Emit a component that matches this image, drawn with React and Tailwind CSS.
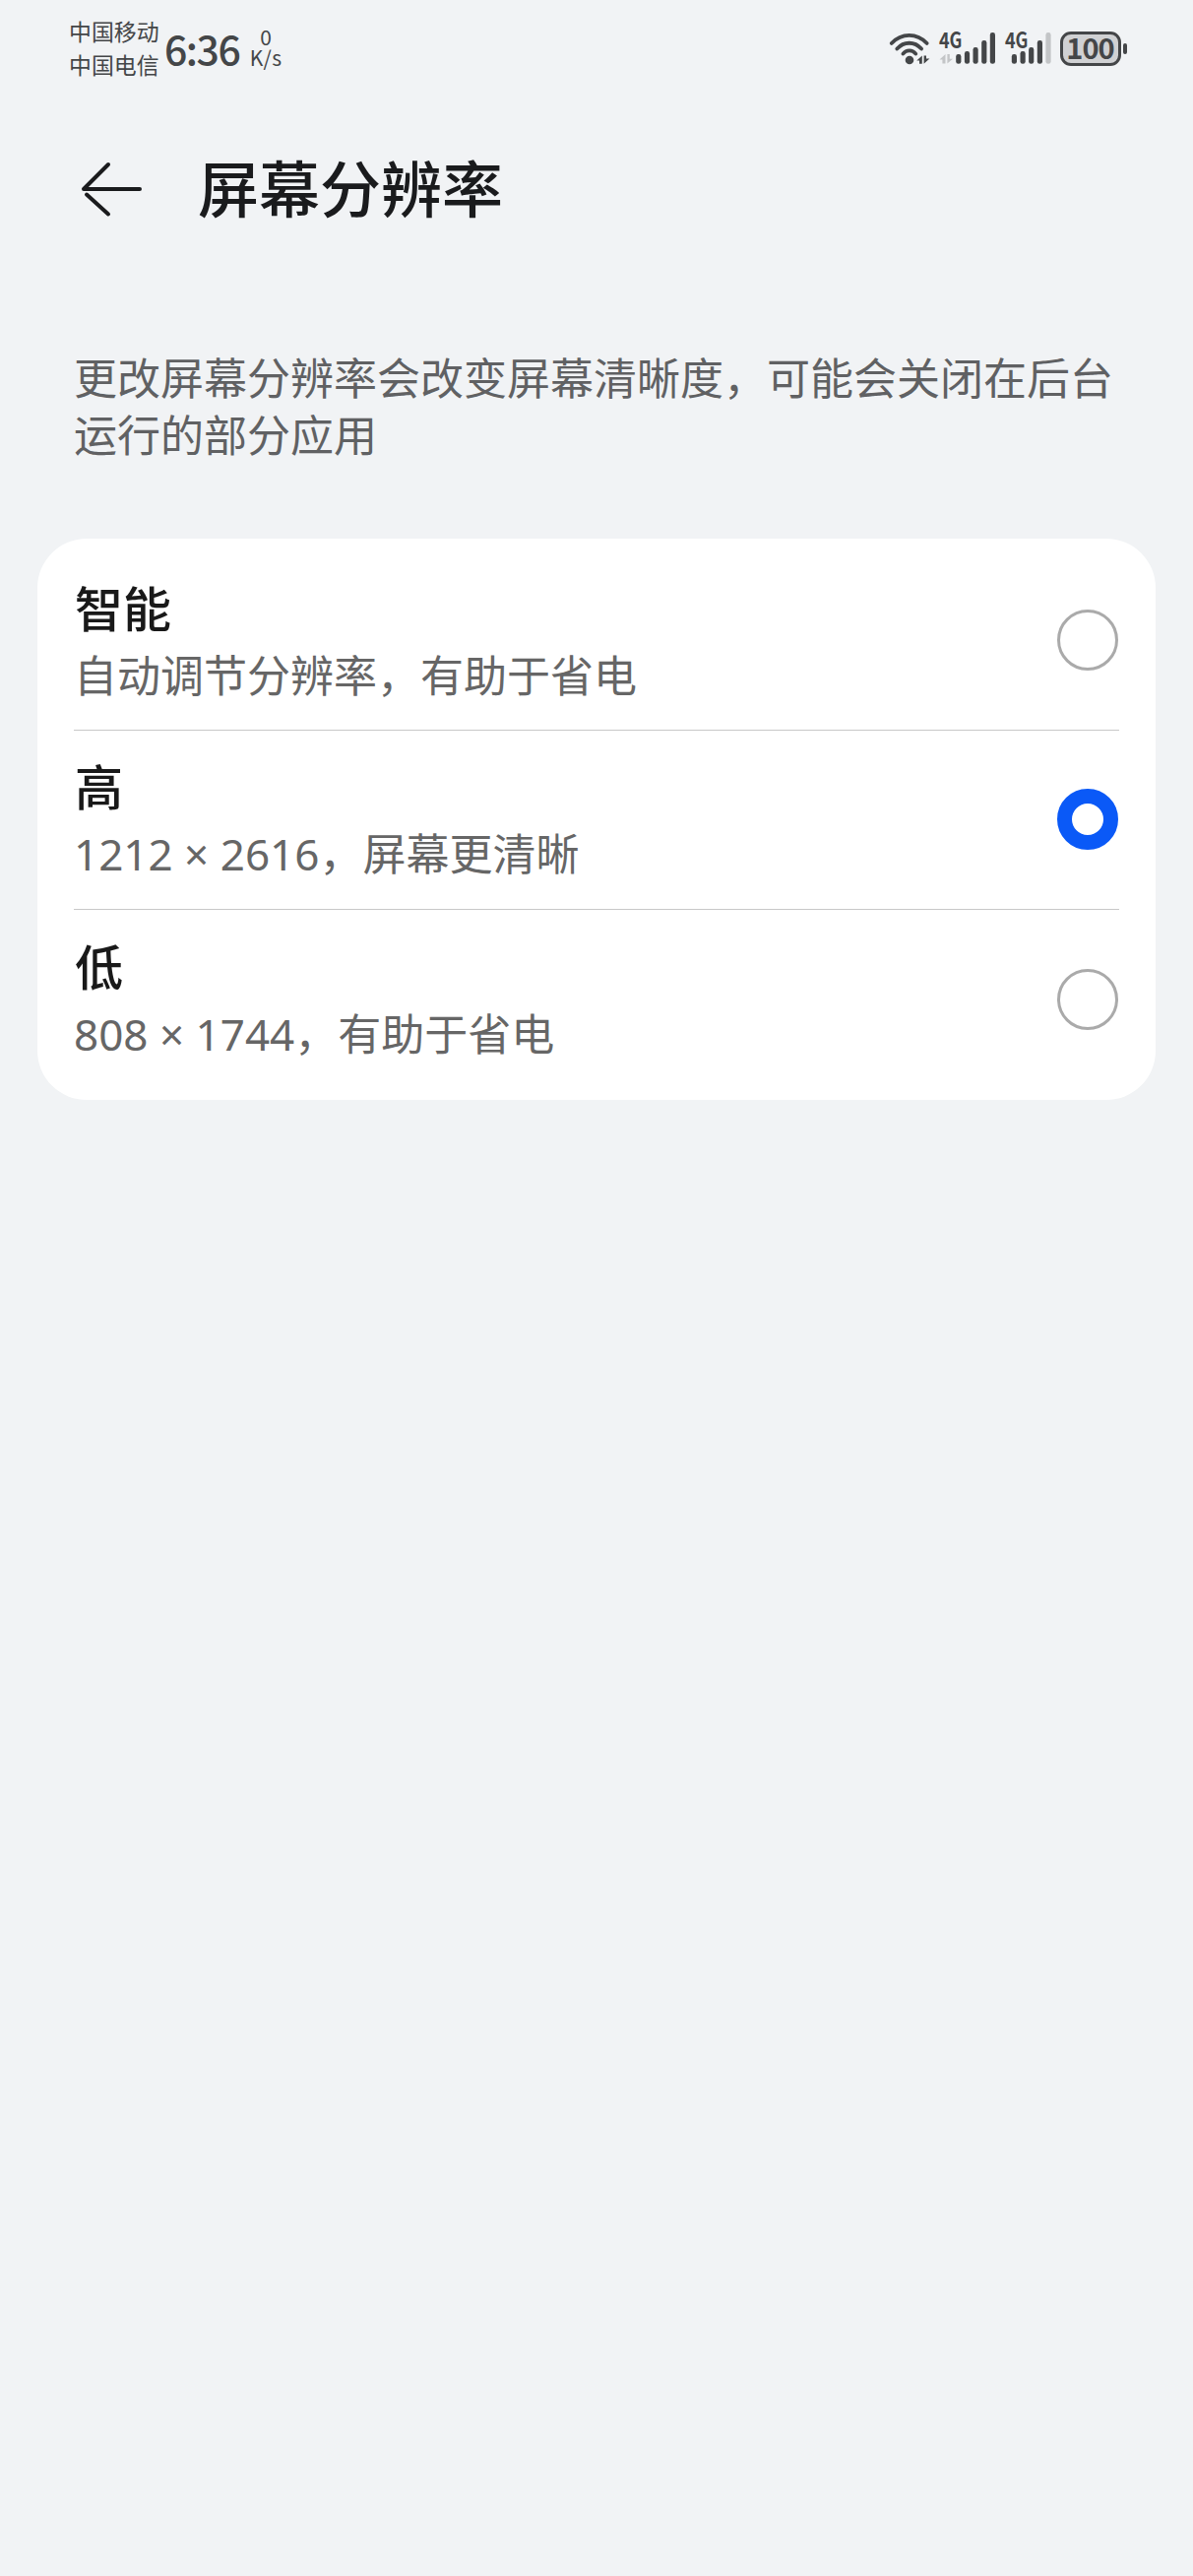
import React, { useState } from 'react';

const options = [
  { id: 'smart', title: '智能', note: '自动调节分辨率，有助于省电' },
  { id: 'high', title: '高', size: '1212 × 2616', note: '，屏幕更清晰' },
  { id: 'low', title: '低', size: '808 × 1744', note: '，有助于省电' },
];

const bars = [
  { x: 0, y: 25 },
  { x: 8.7, y: 22 },
  { x: 17.3, y: 18 },
  { x: 26, y: 11 },
  { x: 34.6, y: 3 },
];

const WifiIcon = () => (
  <svg className="h-[38px] w-[44px]" viewBox="0 0 44 38" fill="none" stroke="#444648" strokeLinecap="round">
    <path d="M4.7 14C15 3.2 30.4 3.2 40.7 14" strokeWidth="3.8" />
    <path d="M10.3 19.6C17.3 11.8 28.1 11.8 35.1 19.6" strokeWidth="3.8" />
    <path d="M16.4 24.6C19.9 20.4 25.8 20.4 29.3 24.6" strokeWidth="3.8" />
    <circle cx="23" cy="31" r="4.3" fill="#444648" stroke="none" />
    <path d="M30.3 31.6L35.8 26.5V34.8H33V31.6ZM37.6 26.5H40V29.4H43.4L37.6 34.8Z" fill="#444648" stroke="none" />
  </svg>
);

const SignalIcon = ({ level, offset, idle }) => (
  <svg className="h-[38px] w-[58px] overflow-visible" viewBox="0 0 58 38">
    <text
      x="0"
      y="19.3"
      fontSize="22"
      fontWeight="700"
      textLength="23.5"
      lengthAdjust="spacingAndGlyphs"
      fill="#444648"
      className="font-['Noto_Sans_CJK_SC',sans-serif]"
    >
      4G
    </text>
    {idle && <path d="M0.5 30.5L6.5 25V34.6H3.4V30.5ZM8.4 25H10.8V29.8H14L8.4 34.6Z" fill="#c3c5c7" />}
    {bars.map((bar, i) => (
      <rect
        key={bar.x}
        x={bar.x + offset}
        y={bar.y}
        width="5.2"
        height={34.8 - bar.y}
        rx="2.4"
        fill={i < level ? '#444648' : '#c3c5c7'}
      />
    ))}
  </svg>
);

const StatusBar = () => (
  <header className="flex h-[98px] items-center justify-between pl-[70px] pr-[67px] text-[#444648]">
    <div className="flex items-center">
      <div className="w-[97px] whitespace-nowrap pb-[3px] text-[22.9px] leading-[34px]">
        <p>中国移动</p>
        <p>中国电信</p>
      </div>
      <p className="w-[86px] pb-[3px] text-[41px] font-medium leading-[50px] tracking-[-1.5px]">6:36</p>
      <div className="w-[34px] pb-[2px] text-center text-[21px] leading-[21px]">
        <p>0</p>
        <p className="whitespace-nowrap tracking-[0.3px]">K/s</p>
      </div>
    </div>
    <div className="flex items-center">
      <WifiIcon />
      <div className="ml-[9px]">
        <SignalIcon level={5} offset={17.2} idle />
      </div>
      <div className="ml-[9px] w-[47px]">
        <SignalIcon level={4} offset={6.8} />
      </div>
      <div className="ml-[9px] flex h-[35px] w-[62px] items-center justify-center rounded-[11px] border-[3px] border-[#444648] bg-[#d0d1d3] pr-px pb-[3px] text-[29px] font-bold leading-none tracking-[-1px]">
        100
      </div>
      <div className="ml-[2px] h-[11px] w-[4px] rounded-full bg-[#444648]" />
    </div>
  </header>
);

const Radio = ({ checked }) => (
  <span
    className={
      checked
        ? 'mr-px mb-px size-[62px] rounded-full border-[15px] border-[#0a59f7] bg-white'
        : 'mr-px mb-px size-[62px] rounded-full border-[3px] border-[#aaaaaa]'
    }
  />
);

const App = () => {
  const [selected, setSelected] = useState('high');

  return (
    <div className="min-h-screen w-[1212px] bg-[#f1f3f5] font-['Noto_Sans_CJK_SC',sans-serif]">
      <StatusBar />

      {/* Title bar */}
      <div className="flex h-[187px] items-center pl-[82px]">
        <button type="button" className="cursor-pointer" aria-label="返回">
          <svg className="h-[58px] w-[63px]" viewBox="0 0 63 58" fill="none" stroke="#1a1b1d" strokeWidth="4" strokeLinecap="round">
            <path d="M60 29H3L28 4" strokeLinejoin="round" />
            <path d="M28 54.5L6 34.5" />
          </svg>
        </button>
        <h1 className="ml-[56px] pb-[5px] text-[62px] font-medium leading-[80px] text-[#1a1b1d]">屏幕分辨率</h1>
      </div>

      <p className="px-[75px] pt-[68px] text-[44px] leading-[58px] text-[#606163]">
        更改屏幕分辨率会改变屏幕清晰度，可能会关闭在后台运行的部分应用
      </p>

      {/* Resolution options */}
      <div className="mx-[38px] mt-[78px] rounded-[50px] bg-white px-[37px] pt-[13px] pb-[11px]">
        {options.map((option) => (
          <button
            key={option.id}
            type="button"
            onClick={() => setSelected(option.id)}
            className="flex h-[182px] w-full cursor-pointer items-center justify-between border-[#c8c8c8] text-left not-last:border-b"
          >
            <div className="pb-px">
              <p className="pl-px text-[49px] font-medium leading-[69px] text-[#191919]">{option.title}</p>
              <p className="text-[44px] leading-[69px] text-[#666666]">
                {option.size && <span className="font-['Noto_Sans',sans-serif]">{option.size}</span>}
                {option.note}
              </p>
            </div>
            <Radio checked={selected === option.id} />
          </button>
        ))}
      </div>
    </div>
  );
};

export default App;
